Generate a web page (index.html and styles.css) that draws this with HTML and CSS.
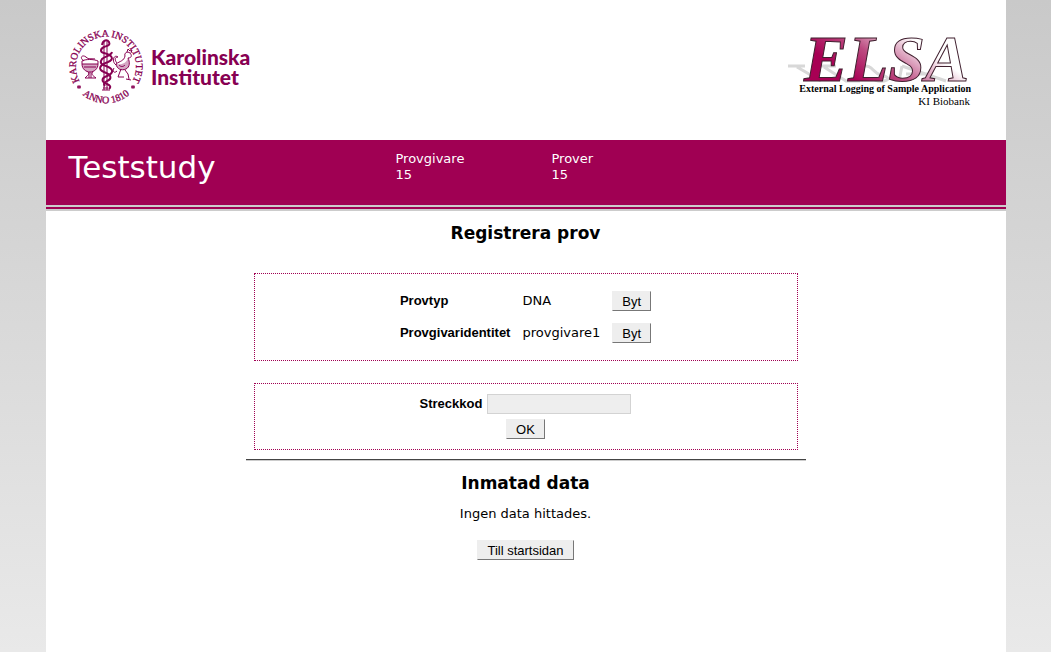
FILE: index.html
```html
<!DOCTYPE html>
<html lang="sv">
<head>
<meta charset="utf-8">
<title>ELSA - Registrera prov</title>
<link rel="stylesheet" href="styles.css">
</head>
<body>
<div class="page">
  <header class="brand">
    <svg class="ki-logo" width="200" height="80" viewBox="0 0 200 80" role="img" aria-label="Karolinska Institutet">
      <defs>
        <path id="ring-top" d="M14 58 A30 30 0 1 1 60 58"/>
        <path id="ring-bottom" d="M9 62 A36 36 0 0 0 65 62"/>
      </defs>
      <text class="ring-text"><textPath href="#ring-top" startOffset="50%">KAROLINSKA INSTITUTET</textPath></text>
      <text class="ring-text ring-year"><textPath href="#ring-bottom" startOffset="50%">ANNO 1810</textPath></text>
      <g class="engraving">
        <path d="M10 57v4M8 58l4 2M12 58l-4 2M64 57v4M62 58l4 2M66 58l-4 2"/>
        <path d="M35 13v49M38 13v49M33 62h8M34 60h5"/>
        <path class="snake" d="M33 17c1-5 5-6 7-3 2 4-3 4-5 5-4 2-4 5 0 6 8 2 11 6 4 9-8 3-11 7-4 10 8 3 8 7 3 9-3 2-4 3-2 5"/>
        <path class="snake" d="M43 24c-1 4-7 4-10 7-3 4 0 6 4 7 8 3 8 7 1 10-6 2-6 6 0 8 4 2 4 3 2 5"/>
        <path class="tint" d="M13 36h16c0 5-4 8-8 8s-8-3-8-8zM47 36c1 5 5 7 10 5 4-2 4-7 2-11-2 5-5 7-12 6z"/>
        <path d="M13 33c3-2 12-2 16 0v3c0 5-4 8-8 8s-8-3-8-8zM13 36h16M15 39h12M19 44c2 2 0 3-3 6h11c-4-3-5-4-3-6M15 33c-5-3-2-7 2-4 3 3 5 1 9 2M20 44v6M22 44v6"/>
        <path d="M47 36c1 5 5 7 10 5 4-2 4-7 2-11 4 0 4-3 2-5-3-2-6 0-5 3-1 5-5 5-9 8zM47 37c-5-4-2-11 2-8-4 0-3 4-1 6M45 40c-2 3 0 6 3 3M50 37c2 2 4 2 6 0M52 41l-3 8h6M56 42l3 4 1 5M57 51l5 1M58 24l1-3 2 2 2-1-1 3"/>
      </g>
      <text class="ki-name" x="82" y="37">Karolinska</text>
      <text class="ki-name" x="82" y="57">Institutet</text>
    </svg>
    <svg class="elsa-logo" width="190" height="78" viewBox="0 0 190 78" role="img" aria-label="ELSA, External Logging of Sample Application, KI Biobank">
      <defs>
        <linearGradient id="elsa-letter" gradientUnits="userSpaceOnUse" x1="80" y1="55" x2="124" y2="-6">
          <stop offset="0" stop-color="#a80054"/>
          <stop offset=".4" stop-color="#bc4a80"/>
          <stop offset=".9" stop-color="#fff"/>
        </linearGradient>
      </defs>
      <g class="shadow">
        <path d="M4 34h17M13 35l24 14M37 34h15M40 35l22 14h14M75 34c16-2 12 7 22 9 15 4 2 8-6 5M118 34l44 15M118 34l-3 15M122 42h23"/>
      </g>
      <text class="elsa-name" x="20" y="49">ELSA</text>
      <text class="elsa-sub" x="187" y="60">External Logging of Sample Application</text>
      <text class="elsa-org" x="186" y="73">KI Biobank</text>
    </svg>
  </header>
  <div class="study">
    <h1 class="study-name">Teststudy</h1>
    <dl class="stat"><dt>Provgivare</dt><dd>15</dd></dl>
    <dl class="stat"><dt>Prover</dt><dd>15</dd></dl>
  </div>
  <main class="content">
    <h2 class="heading">Registrera prov</h2>
    <section class="box details">
      <table class="fields">
        <tbody>
          <tr><th scope="row">Provtyp</th><td>DNA</td><td><button type="button" class="button" aria-label="Byt provtyp">Byt</button></td></tr>
          <tr><th scope="row">Provgivaridentitet</th><td>provgivare1</td><td><button type="button" class="button" aria-label="Byt provgivaridentitet">Byt</button></td></tr>
        </tbody>
      </table>
    </section>
    <form class="box barcode">
      <div class="barcode-row">
        <label class="label" for="streckkod">Streckkod</label>
        <input class="input" id="streckkod" type="text">
      </div>
      <button type="submit" class="button">OK</button>
    </form>
    <hr class="rule">
    <h2 class="heading">Inmatad data</h2>
    <p class="message">Ingen data hittades.</p>
    <button type="button" class="button">Till startsidan</button>
  </main>
</div>
</body>
</html>
```
FILE: styles.css
```css
* {
  box-sizing: border-box;
}

body {
  margin: 0;
  min-height: 100vh;
  background: linear-gradient(#c9c9c9, #e9e9e9);
  color: #000;
  font: 13px/16px "DejaVu Sans", Verdana, sans-serif;
}

.page {
  max-width: 960px;
  min-height: 100vh;
  margin: 0 auto;
  background: #fff;
}

.brand {
  display: flex;
  justify-content: space-between;
  align-items: flex-start;
  height: 140px;
  padding: 28px 32px 0 23px;
}

.ki-logo {
  overflow: visible;
}

.elsa-logo {
  margin-top: 4px;
  overflow: visible;
}

.ring-text {
  font: 10px "Liberation Serif", serif;
  fill: #870052;
  stroke: #870052;
  stroke-width: .3px;
  text-anchor: middle;
}

.engraving {
  fill: none;
  stroke: #870052;
  stroke-width: 1;
}

.snake {
  stroke-width: 2;
}

.tint {
  fill: #870052;
  fill-opacity: .35;
  stroke: none;
}

.ki-name {
  font: 900 21px Lato, sans-serif;
  fill: #870052;
}

.shadow {
  fill: none;
  stroke: #d8d8d8;
  stroke-width: 3;
}

.elsa-name {
  font: italic bold 66px "Liberation Serif", serif;
  fill: url(#elsa-letter);
  stroke: #40202f;
  stroke-width: 1;
}

.elsa-sub {
  font: bold 10px "Liberation Serif", serif;
  text-anchor: end;
}

.elsa-org {
  font: 11px "Liberation Serif", serif;
  text-anchor: end;
}

.study {
  display: flex;
  height: 71px;
  padding: 11px 23px 0;
  background: linear-gradient(#a00053 65px, #ccc 65px 67px, #a00053 67px 69px, #ccc 69px);
  color: #fff;
}

.study-name {
  flex: 0 0 327px;
  margin: 0;
  font-size: 31px;
  font-weight: normal;
  line-height: 32px;
}

.stat {
  flex: 0 0 156px;
  margin: 0;
}

.stat dd {
  margin: 0;
}

.content {
  display: flex;
  flex-direction: column;
  align-items: center;
  max-width: 560px;
  margin: 0 auto;
  padding-top: 12px;
}

.heading {
  margin: 0;
  font-size: 17px;
  line-height: 20px;
}

.box {
  align-self: stretch;
  margin: 0 8px;
  border: 1px dotted #a00053;
}

.details {
  display: flex;
  justify-content: center;
  margin-top: 30px;
  padding: 11px 0;
}

.fields {
  border-collapse: collapse;
}

.fields th,
.fields td {
  height: 32px;
  padding: 0 6px;
  text-align: left;
}

.fields th,
.label {
  font: bold 13px/16px "Liberation Sans", Arial, sans-serif;
}

.button {
  height: 20px;
  padding: 1px 9px 0;
  border: 1px solid #eee;
  border-right-color: #777;
  border-bottom-color: #777;
  background: #eee;
  color: #000;
  font: 13px/16px "Liberation Sans", Arial, sans-serif;
}

.barcode {
  display: flex;
  flex-direction: column;
  align-items: center;
  gap: 5px;
  margin-top: 22px;
  padding: 10px 0;
}

.barcode-row {
  display: flex;
  align-items: center;
  gap: 5px;
}

.input {
  width: 144px;
  height: 20px;
  padding: 1px 4px;
  border: 1px solid #d3d3d3;
  background: #eee;
  font: 13px/16px "DejaVu Sans", Verdana, sans-serif;
}

.rule {
  align-self: stretch;
  height: 2px;
  margin: 9px 0 12px;
  border: 0;
  border-top: 1px solid #444;
  border-bottom: 1px solid #ccc;
}

.message {
  margin: 13px 0 18px;
}
```
